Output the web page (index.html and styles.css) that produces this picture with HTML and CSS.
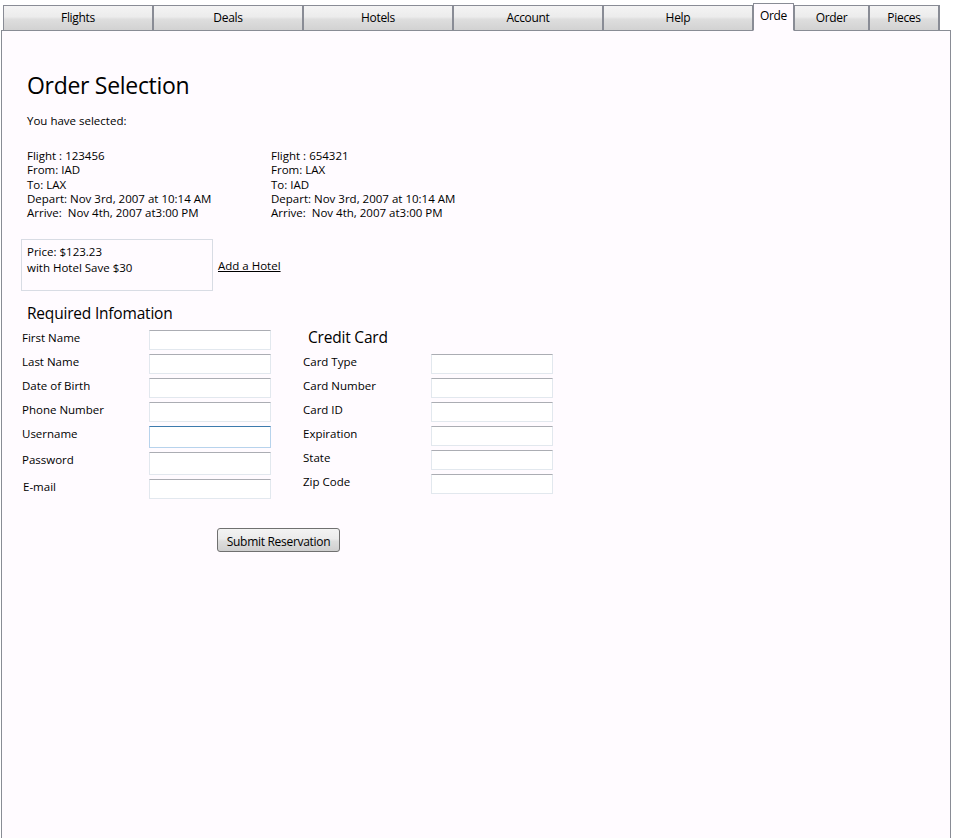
FILE: index.html
```html
<!DOCTYPE html>
<html>
<head>
<meta charset="utf-8">
<title>Order Selection</title>
<link rel="stylesheet" href="styles.css">
</head>
<body>
<div class="tabs">
  <div class="tab w150">Flights</div>
  <div class="tab w150">Deals</div>
  <div class="tab w150">Hotels</div>
  <div class="tab w150">Account</div>
  <div class="tab w150">Help</div>
  <div class="tab selected">Orde</div>
  <div class="tab w75">Order</div>
  <div class="tab w70">Pieces</div>
</div>
<div class="panel">
  <h1 class="title">Order Selection</h1>
  <p class="selected-label">You have selected:</p>
  <div class="flights">
    <div class="flight">
      <div>Flight : 123456</div>
      <div>From: IAD</div>
      <div>To: LAX</div>
      <div>Depart: Nov 3rd, 2007 at 10:14 AM</div>
      <div>Arrive:&nbsp; Nov 4th, 2007 at3:00 PM</div>
    </div>
    <div class="flight">
      <div>Flight : 654321</div>
      <div>From: LAX</div>
      <div>To: IAD</div>
      <div>Depart: Nov 3rd, 2007 at 10:14 AM</div>
      <div>Arrive:&nbsp; Nov 4th, 2007 at3:00 PM</div>
    </div>
  </div>
  <div class="price-row">
    <div class="price-box">
      <div>Price: $123.23</div>
      <div>with Hotel Save $30</div>
    </div>
    <a class="hotel-link" href="#">Add a Hotel</a>
  </div>
  <h2 class="section">Required Infomation</h2>
  <div class="form">
    <div class="grid left">
      <label class="lbl">First Name</label><div class="input"></div>
      <label class="lbl">Last Name</label><div class="input"></div>
      <label class="lbl">Date of Birth</label><div class="input"></div>
      <label class="lbl">Phone Number</label><div class="input"></div>
      <label class="lbl">Username</label><div class="input focus"></div>
      <label class="lbl">Password</label><div class="input"></div>
      <label class="lbl email">E-mail</label><div class="input"></div>
    </div>
    <div class="card">
      <h2 class="section card-title">Credit Card</h2>
      <div class="grid right">
        <label class="lbl">Card Type</label><div class="input"></div>
        <label class="lbl">Card Number</label><div class="input"></div>
        <label class="lbl">Card ID</label><div class="input"></div>
        <label class="lbl">Expiration</label><div class="input"></div>
        <label class="lbl">State</label><div class="input"></div>
        <label class="lbl">Zip Code</label><div class="input"></div>
      </div>
    </div>
  </div>
  <button class="submit">Submit Reservation</button>
</div>
</body>
</html>
```
FILE: styles.css
```css
* { box-sizing: border-box; }
html, body { margin: 0; padding: 0; background: #ffffff; }
body {
  font-family: "Open Sans", "Noto Sans", sans-serif;
  font-size: 11.5px;
  color: #000;
  overflow: hidden;
  height: 838px;
}
.tabs {
  display: flex;
  align-items: flex-end;
  padding-left: 3px;
  height: 31px;
  position: relative;
  z-index: 2;
}
.tab {
  height: 26px;
  border: 1px solid #898c95;
  border-right-width: 2px;
  margin-right: -1px;
  background: linear-gradient(#f4f4f4, #ececec 45%, #dedede 55%, #d2d2d2);
  font-size: 12px;
  letter-spacing: -0.3px;
  display: flex;
  align-items: center;
  justify-content: center;
  padding-bottom: 1px;
}
.w150 { width: 151px; }
.w75 { width: 76px; }
.w70 { width: 71px; }
.tab.selected {
  width: 41px;
  height: 28px;
  background: #fffbff;
  border-bottom-color: #fffbff;
  border-right-width: 1px;
  padding-bottom: 3px;
  margin-right: 0;
}
.panel {
  margin: -1px 0 0 1px;
  width: 950px;
  height: 820px;
  border: 1px solid #898c95;
  background: #fffbff;
  padding: 38px 0 0 19px;
}
.title {
  margin: 0 0 0 6px;
  font-size: 23px;
  font-weight: 400;
  line-height: 32px;
  letter-spacing: -0.3px;
}
.selected-label {
  margin: 13px 0 0 6px;
  line-height: 14px;
}
.flights {
  display: flex;
  margin: 21px 0 0 6px;
}
.flight {
  width: 244px;
  line-height: 14.3px;
}
.price-row {
  display: flex;
  align-items: center;
  margin-top: 19px;
}
.price-box {
  width: 192px;
  height: 52px;
  border: 1px solid #d8dce4;
  padding: 4px 5px;
  line-height: 16px;
}
.hotel-link {
  margin-left: 5px;
  color: #000;
  padding-top: 1px;
}
.section {
  margin: 11px 0 0 6px;
  font-size: 15.5px;
  font-weight: 400;
  line-height: 22px;
  letter-spacing: -0.2px;
}
.form {
  display: flex;
  margin: 6px 0 0 1px;
}
.grid {
  display: grid;
  grid-template-columns: 127px 122px;
  row-gap: 4px;
  align-items: start;
}
.grid.left { grid-template-rows: 20px 20px 20px 20px 22px 23px 20px; }
.grid.right { grid-template-rows: repeat(6, 20px); }
.lbl { line-height: 14px; margin-top: 1px; }
.lbl.email { padding-left: 1px; }
.right .lbl { margin-left: -1px; }
.input {
  height: 100%;
  border: 1px solid #e2e8ee;
  border-top-color: #abadb3;
  background: #ffffff;
}
.input.focus {
  border-color: #b7d3ec;
  border-top-color: #3d7bad;
}
.card { margin-left: 33px; }
.card-title {
  margin: -4px 0 0 4px;
  height: 28px;
}
.submit {
  display: block;
  margin: 29px 0 0 196px;
  width: 123px;
  height: 24px;
  border: 1px solid #707070;
  border-radius: 3px;
  background: linear-gradient(#f3f3f3, #ebebeb 45%, #dddddd 55%, #cfcfcf);
  font-family: "Open Sans", "Noto Sans", sans-serif;
  font-size: 12px;
  letter-spacing: -0.3px;
  color: #000;
  padding: 2px 0 0;
}
```
